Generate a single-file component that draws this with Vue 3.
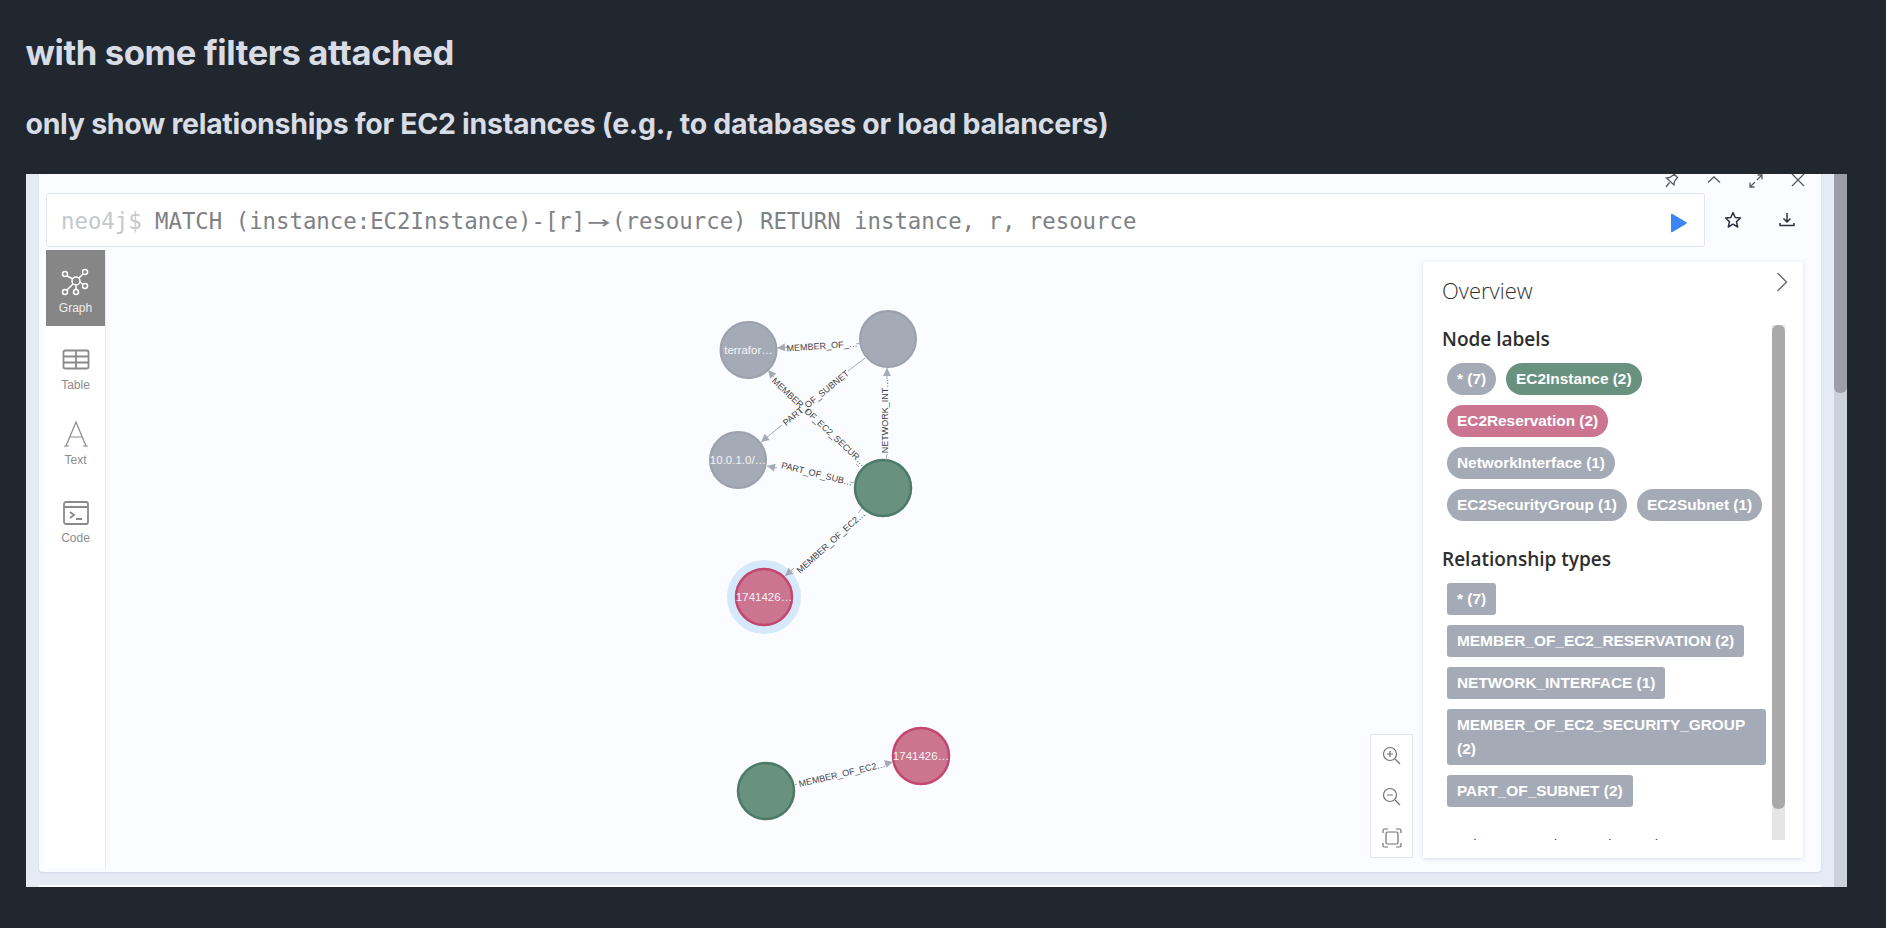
<script setup>
const nodeLabels = [
  { t: '* (7)', c: 'gray' }, { t: 'EC2Instance (2)', c: 'green' }, { t: 'EC2Reservation (2)', c: 'pink' },
  { t: 'NetworkInterface (1)', c: 'gray' }, { t: 'EC2SecurityGroup (1)', c: 'gray' }, { t: 'EC2Subnet (1)', c: 'gray' }
]
const relTypes = ['* (7)', 'MEMBER_OF_EC2_RESERVATION (2)', 'NETWORK_INTERFACE (1)', 'MEMBER_OF_EC2_SECURITY_GROUP (2)', 'PART_OF_SUBNET (2)']
const nodes = [
  { x: 748.5, y: 349, c: 'gray', t: 'terrafor…' }, { x: 888, y: 338, c: 'gray', t: '' },
  { x: 738, y: 459, c: 'gray', t: '10.0.1.0/…' }, { x: 883, y: 487, c: 'green', t: '' },
  { x: 764, y: 596, c: 'pink', t: '1741426…' }, { x: 921, y: 755, c: 'pink', t: '1741426…' },
  { x: 766, y: 790, c: 'green', t: '' }
]
const edges = [
  { a: [886, 459], b: [887, 453], tip: [887, 367], l: [887, 378], t: 'NETWORK_INT…', cx: 885, cy: 415, r: -90 },
  { a: [860, 342], b: [856, 343], tip: [777, 347], l: [790, 346], t: 'MEMBER_OF_…', cx: 822, cy: 345, r: -4 },
  { a: [865, 357], b: [848, 370], tip: [761, 441], l: [782, 424], t: 'PART_OF_SUBNET', cx: 816, cy: 397, r: -39 },
  { a: [859, 466], b: [856, 463], tip: [768, 369], l: [774, 376], t: 'MEMBER_OF_EC2_SECUR…', cx: 819, cy: 421, r: 43 },
  { a: [855, 482], b: [850, 481], tip: [767, 465], l: [777, 467], t: 'PART_OF_SUB…', cx: 817, cy: 473, r: 14 },
  { a: [862, 507], b: [858, 512], tip: [785, 575], l: [794, 567], t: 'MEMBER_OF_EC2…', cx: 831, cy: 541, r: -42 },
  { a: [794, 784], b: [797, 783], tip: [893, 761], l: [885, 763], t: 'MEMBER_OF_EC2…', cx: 842, cy: 773, r: -13 }
]
function arrow(e) {
  const [tx, ty] = e.tip, [lx, ly] = e.l
  const d = Math.hypot(tx - lx, ty - ly), ux = (tx - lx) / d, uy = (ty - ly) / d
  const bx = tx - ux * 8, by = ty - uy * 8, w = 4
  return `${tx},${ty} ${bx - uy * w},${by + ux * w} ${bx + uy * w},${by - ux * w}`
}
</script>

<template>
  <div class="page">
    <h2 class="h1">with some filters attached</h2>
    <h3 class="h2">only show relationships for EC2 instances (e.g., to databases or load balancers)</h3>
    <div class="shot">
      <div class="stripe">
        <div class="frame">
          <div class="winbar">
            <svg width="14" height="14" viewBox="0 0 14 14" class="wi"><path d="M8 -1 13 4M9.500 0 5 3.500 1.500 4 9 11 9.500 7.500 12.500 3M4.500 8.500 1 13" /></svg>
            <svg width="14" height="14" viewBox="0 0 14 14" class="wi"><path d="M1 8.500 7 3 13 8.500" /></svg>
            <svg width="14" height="14" viewBox="0 0 14 14" class="wi"><path d="M1 13 6 8M1 8.500V13H5.500M13 1 8 6M13 5.500V1H8.500" /></svg>
            <svg width="14" height="14" viewBox="0 0 14 14" class="wi"><path d="M1 0 13 12M13 0 1 12" /></svg>
          </div>
          <div class="editrow">
            <div class="editor">
              <span class="prompt">neo4j$</span>
              <span class="query">MATCH (instance:EC2Instance)-[r]<span class="arr">→</span>(resource) RETURN instance, r, resource</span>
              <svg class="play" width="16" height="20" viewBox="0 0 16 20"><path d="M1.500 1 15 9Q16.500 10 15 11L1.500 19Q0 20 0 18V2Q0 0 1.500 1Z" fill="#3b85f6" /></svg>
            </div>
            <div class="acts">
              <svg width="18" height="18" viewBox="0 0 18 18" class="act"><path d="M9 1.500 11.200 6.500 16.500 7 12.500 10.600 13.700 16 9 13.200 4.300 16 5.500 10.600 1.500 7 6.800 6.500Z" /></svg>
              <svg width="18" height="18" viewBox="0 0 18 18" class="act"><path d="M9 2V11M5.500 7.500 9 11 12.500 7.500M2 12V14.500H16V12" /></svg>
            </div>
          </div>
          <div class="main">
            <nav class="side">
              <div class="tab on">
                <span class="tibox"><svg width="32" height="32" viewBox="0 0 32 32" class="ticon">
                  <circle cx="16" cy="15" r="4" /><circle cx="5" cy="8" r="2.500" /><circle cx="25" cy="6" r="2.500" /><circle cx="25" cy="20" r="2.500" /><circle cx="16" cy="26" r="2.500" /><circle cx="5" cy="26" r="2.500" />
                  <path d="M7 10 13 13M23 8 19 12M20 16 23 18.500M16 19V23.500M13 18 7 24" />
                </svg></span>
                <span class="tlabel">Graph</span>
              </div>
              <div class="tab">
                <span class="tibox"><svg width="28" height="22" viewBox="0 0 28 22" class="ticon"><rect x="1.500" y="1.500" width="25" height="18" rx="1.500" /><path d="M1.500 7.500H26.500M1.500 13.500H26.500M14 1.500V19.500" /></svg></span>
                <span class="tlabel">Table</span>
              </div>
              <div class="tab">
                <span class="tibox"><svg width="24" height="26" viewBox="0 0 24 26" class="ticon thin"><path d="M2 25 12 1 22 25M0 25H5M19 25H24M6 16H18" /></svg></span>
                <span class="tlabel">Text</span>
              </div>
              <div class="tab">
                <span class="tibox"><svg width="26" height="24" viewBox="0 0 26 24" class="ticon"><rect x="1" y="1" width="24" height="22" rx="2" /><path d="M1 6H25M7 11 11 14 7 17M13 18H19" /></svg></span>
                <span class="tlabel">Code</span>
              </div>
            </nav>
            <div class="canvas">
              <svg class="graph" width="1100" height="618" viewBox="106 249 1100 618">
                <circle cx="764" cy="596" r="37" fill="#d5e9fb" />
                <g v-for="(n, i) in nodes" :key="'n' + i">
                  <circle :cx="n.x" :cy="n.y" r="28" :class="['node', n.c]" />
                  <text :x="n.x" :y="n.y + 4" class="nlabel" text-anchor="middle">{{ n.t }}</text>
                </g>
                <g v-for="(e, i) in edges" :key="'e' + i">
                  <line :x1="e.a[0]" :y1="e.a[1]" :x2="e.b[0]" :y2="e.b[1]" class="edge" />
                  <line :x1="e.l[0]" :y1="e.l[1]" :x2="e.tip[0]" :y2="e.tip[1]" class="edge" />
                  <polygon :points="arrow(e)" class="head" />
                  <text :transform="`translate(${e.cx} ${e.cy}) rotate(${e.r})`" class="elabel" text-anchor="middle" dy="3">{{ e.t }}</text>
                </g>
              </svg>
              <div class="zoomer">
                <svg width="20" height="20" viewBox="0 0 20 20" class="zi"><circle cx="8" cy="8" r="6.500" /><path d="M13 13 18 18M8 5V11M5 8H11" /></svg>
                <svg width="20" height="20" viewBox="0 0 20 20" class="zi"><circle cx="8" cy="8" r="6.500" /><path d="M13 13 18 18M5 8H11" /></svg>
                <svg width="20" height="20" viewBox="0 0 20 20" class="zi"><rect x="4" y="4" width="12" height="12" rx="1.500" /><path d="M1 5V2.500Q1 1 2.500 1H6M14 1H17.500Q19 1 19 2.500V5M19 15V17.500Q19 19 17.500 19H14M6 19H2.500Q1 19 1 17.500V15" /></svg>
              </div>
              <aside class="panel">
                <header class="phead">
                  <span class="ptitle">Overview</span>
                  <svg width="12" height="20" viewBox="0 0 12 20" class="chev"><path d="M1.500 1 10.500 10 1.500 19" /></svg>
                </header>
                <div class="pbody">
                  <div class="pcontent">
                    <h4 class="sect">Node labels</h4>
                    <div class="pills">
                      <span v-for="n in nodeLabels" :key="n.t" :class="['pill', n.c]">{{ n.t }}</span>
                    </div>
                    <h4 class="sect rel">Relationship types</h4>
                    <div class="pills">
                      <span v-for="r in relTypes" :key="r" class="tag">{{ r }}</span>
                    </div>
                    <p class="foot">Displaying 7 nodes, 7 relationships.</p>
                  </div>
                  <div class="pscroll"><div class="pthumb"></div></div>
                </div>
              </aside>
            </div>
          </div>
        </div>
        <div class="nextcard"></div>
      </div>
      <div class="scroll"><div class="thumb"></div></div>
    </div>
  </div>
</template>

<style>
html, body { margin: 0; background: #21272f; overflow: hidden; }
</style>

<style scoped>
.page { height: 928px; background: #21272f; padding: 0 0 0 26px; box-sizing: border-box; font-family: Inter, "Liberation Sans", sans-serif; }
.h1 { margin: 0 0 0 -0.5px; padding-top: 32px; font-size: 34.600px; line-height: 40px; font-weight: 700; color: #d8dce4; letter-spacing: -0.4px; white-space: nowrap; }
.h2 { margin: 0 0 0 -0.5px; padding-top: 32px; font-size: 28.500px; line-height: 40px; font-weight: 700; color: #d8dce4; letter-spacing: -0.3px; white-space: nowrap; }
.shot { margin-top: 30px; width: 1821px; height: 713px; display: flex; overflow: hidden; background: #e4ebf4; }
.stripe { flex: 1; padding-left: 13px; min-width: 0; }
.frame { height: 698px; width: 1781.500px; background: #fbfcff; border-radius: 0 0 4px 4px; box-shadow: 0 1px 2px rgba(160,175,195,.35); display: flex; flex-direction: column; }
.nextcard { height: 2px; margin-top: 13px; background: #fbfcff; width: 1781.500px; }
.scroll { width: 13px; background: #cad2da; }
.thumb { height: 219px; background: #9b9ea6; border-radius: 0 0 6px 6px; }
.winbar { height: 19px; display: flex; justify-content: flex-end; gap: 28px; padding-right: 16px; box-sizing: border-box; overflow: hidden; }
.wi { fill: none; stroke: #565b64; stroke-width: 1.300; flex: none; }
.editrow { height: 54px; display: flex; padding-left: 7px; }
.editor { width: 1659px; height: 54px; box-sizing: border-box; border: 1.500px solid #dde6f1; border-radius: 3px; background: #fff; display: flex; align-items: center; padding: 2px 17px 0 14px; font-family: "DejaVu Sans Mono", "Liberation Mono", monospace; font-size: 22.330px; white-space: pre; }
.prompt { color: #c5c8cc; margin-right: 13.400px; }
.query { color: #7e8186; flex: 1; }
.arr { display: inline-block; width: 2ch; text-align: center; transform: scaleX(1.7); }
.play { margin-top: 3px; }
.acts { display: flex; gap: 36px; padding: 18px 0 0 19px; }
.act { fill: none; stroke: #2c3440; stroke-width: 1.500; stroke-linejoin: round; }
.main { display: flex; padding: 3px 0 0 7px; height: 622px; box-sizing: border-box; }
.side { width: 59px; height: 618px; background: #fff; border-right: 1.500px solid #e5ecf4; flex: none; }
.tab { height: 76px; box-sizing: border-box; padding-top: 16px; display: flex; flex-direction: column; align-items: center; color: #8c8c8c; font-family: "Liberation Sans", sans-serif; font-size: 12px; }
.tab:nth-child(2) { padding-top: 18px; }
.tab:nth-child(2) .tlabel { margin-top: 1px; }
.tab:nth-child(4) { padding-top: 19px; }
.tab:nth-child(4) .tlabel { margin-top: 1px; }
.tab.on { background: #868686; color: #eee; }
.tibox { height: 34px; display: flex; align-items: center; justify-content: center; margin-top: -1px; }
.tlabel { line-height: 14px; margin-top: 2px; }
.ticon { fill: none; stroke: #8a8a8a; stroke-width: 1.800; }
.ticon.thin { stroke-width: 1.200; }
.on .ticon { stroke: #fff; stroke-width: 1.500; }
.canvas { flex: 1; position: relative; display: flex; justify-content: flex-end; align-items: flex-end; padding: 11px 17.500px 11px 0; gap: 10px; }
.graph { position: absolute; left: 0; top: 0; }
.edge { stroke: #a5abb6; stroke-width: 1; }
.head { fill: #a5abb6; }
.elabel { font: 9px "Liberation Sans", sans-serif; fill: #444; }
.nlabel { font: 11.500px "Liberation Sans", sans-serif; fill: #f4f4f4; }
.node.gray { fill: #a5abb6; stroke: #9aa1ac; stroke-width: 2; }
.node.green { fill: #68927f; stroke: #4d7a67; stroke-width: 2.500; }
.node.pink { fill: #cc7591; stroke: #c2466d; stroke-width: 2.500; }
.zoomer { position: relative; width: 43px; height: 124px; box-sizing: border-box; background: #fff; border: 1.500px solid #dfe7f1; display: flex; flex-direction: column; align-items: center; justify-content: center; gap: 21px; padding-top: 2px; }
.zi { fill: none; stroke: #6d7178; stroke-width: 1.200; }
.panel { position: relative; width: 380px; height: 596px; background: #fff; box-shadow: 0 1px 4px rgba(150,165,185,.35); display: flex; flex-direction: column; }
.phead { height: 63px; flex: none; padding: 0 15px 0 19px; display: flex; justify-content: space-between; position: relative; }
.ptitle { font: 300 22px/57px "Open Sans", sans-serif; color: #333; }
.chev { fill: none; stroke: #666; stroke-width: 1.300; margin-top: 10px; }
.pbody { height: 515px; display: flex; padding-left: 19px; overflow: hidden; }
.pcontent { width: 330px; flex: none; overflow: hidden; }
.sect { margin: 0; font: 600 19px/28px "Open Sans", sans-serif; color: #2d2d2d; }
.sect.rel { margin-top: 24px; }
.pills { display: flex; flex-wrap: wrap; gap: 10px; padding: 10px 0 0 5px; }
.pill { height: 32px; padding: 0 10px; border-radius: 16px; font: bold 15.400px/32px "Liberation Sans", sans-serif; color: #fff; background: #a5abb6; white-space: nowrap; box-sizing: border-box; }
.pill.green { background: #68927f; }
.pill.pink { background: #cc7591; }
.tag { padding: 4px 10px; border-radius: 3px; font: bold 15.400px/24px "Liberation Sans", sans-serif; color: #fff; background: #a5abb6; box-sizing: border-box; max-width: 319px; }
.foot { margin: 27px 0 0; font: 15px/20px "Open Sans", sans-serif; color: #333; }
.pscroll { width: 13px; background: #e5e5e5; }
.pthumb { height: 484px; background: #a9a9a9; border-radius: 6px; }
</style>
